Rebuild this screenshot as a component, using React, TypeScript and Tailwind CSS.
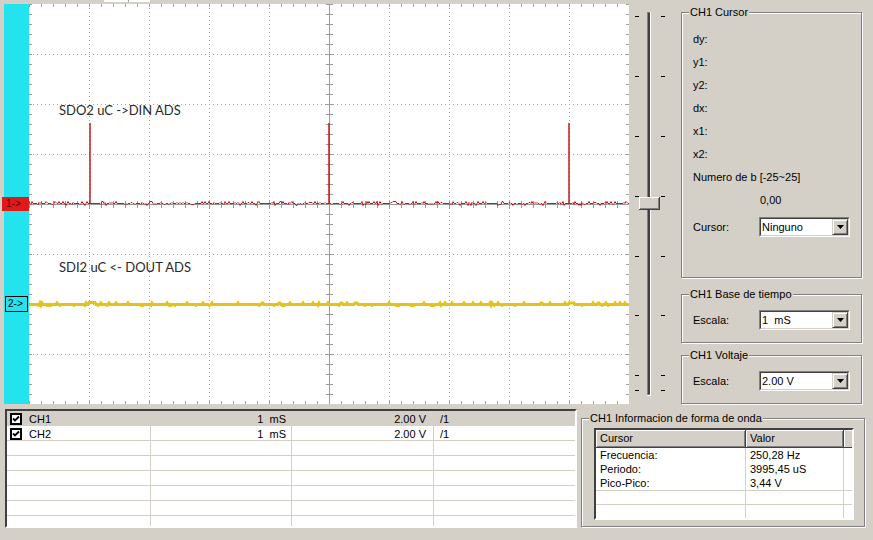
import React from 'react';

const W = 600;
const H = 400;

function makeRand(seed: number) {
  let s = seed;
  return () => {
    s = (s * 16807) % 2147483647;
    return (s - 1) / 2147483646;
  };
}

function redPoints() {
  const r = makeRand(11);
  const pts: string[] = [];
  for (let x = 0; x <= W; x++) {
    if (x === 61 || x === 300 || x === 540) {
      pts.push(`${x},199.5`, `${x},119`, `${x},199.5`);
      continue;
    }
    const v = r();
    let d = 0;
    if (v < 0.1) d = -2;
    else if (v < 0.22) d = -1;
    else if (v < 0.32) d = 1;
    else if (v < 0.36) d = 2;
    pts.push(`${x},${199.5 + d}`);
  }
  return pts.join(' ');
}

function yellowPoints() {
  const r = makeRand(29);
  const pts: string[] = [];
  for (let x = 0; x <= W; x++) {
    const v = r();
    let d = 0;
    if (v < 0.08) d = -1.5;
    else if (v < 0.14) d = 0.8;
    if (x >= 60 && x <= 66) d = -2;
    if (x >= 540 && x <= 545) d = -1.5;
    pts.push(`${x},${300.5 + d}`);
  }
  return pts.join(' ');
}

const RED = redPoints();
const YELLOW = yellowPoints();

function Plot() {
  const vs = [60, 120, 180, 240, 360, 420, 480, 540];
  const hs = [50, 100, 150, 250, 300, 350];
  const ticksX = Array.from({ length: 51 }, (_, i) => i * 12);
  const ticksY = Array.from({ length: 41 }, (_, i) => i * 10);
  return (
    <svg width={W} height={H} className="block shrink-0">
      <rect width={W} height={H} fill="#ffffff" />
      {vs.map((x) => (
        <line key={'v' + x} x1={x + 0.5} y1={0} x2={x + 0.5} y2={H} stroke="#a4a4a4" strokeDasharray="1 3" />
      ))}
      {hs.map((y) => (
        <line key={'h' + y} x1={0} y1={y + 0.5} x2={W} y2={y + 0.5} stroke="#a4a4a4" strokeDasharray="1 3" />
      ))}
      {/* center axes */}
      <line x1={300.5} y1={0} x2={300.5} y2={H} stroke="#9a9a9a" />
      <line x1={0} y1={200.5} x2={W} y2={200.5} stroke="#9a9a9a" />
      {ticksY.map((y) => (
        <line key={'cy' + y} x1={297} y1={y + 0.5} x2={304} y2={y + 0.5} stroke="#9a9a9a" />
      ))}
      {ticksX.map((x) => (
        <line key={'cx' + x} x1={x + 0.5} y1={197} x2={x + 0.5} y2={204} stroke="#9a9a9a" />
      ))}
      {/* border rulers */}
      {ticksX.map((x) => (
        <g key={'tx' + x}>
          <line x1={x + 0.5} y1={0} x2={x + 0.5} y2={3} stroke="#a0a0a0" />
          <line x1={x + 0.5} y1={H - 3} x2={x + 0.5} y2={H} stroke="#a0a0a0" />
        </g>
      ))}
      {ticksY.map((y) => (
        <g key={'ty' + y}>
          <line x1={0} y1={y + 0.5} x2={3} y2={y + 0.5} stroke="#a0a0a0" />
          <line x1={W - 3} y1={y + 0.5} x2={W} y2={y + 0.5} stroke="#a0a0a0" />
        </g>
      ))}
      <polyline points={YELLOW} fill="none" stroke="#e5c11b" strokeWidth={3} />
      <polyline points={RED} fill="none" stroke="#c01a1a" strokeWidth={1} />
      <text x={30} y={111} fontFamily="Lato, 'Open Sans', sans-serif" fontSize={13} fill="#2a2a2a">
        SDO2 uC -&gt;DIN ADS
      </text>
      <text x={30} y={268} fontFamily="Lato, 'Open Sans', sans-serif" fontSize={13} fill="#2a2a2a">
        SDI2 uC &lt;- DOUT ADS
      </text>
    </svg>
  );
}

function Slider() {
  const ticks = [12, 72, 132, 192, 252, 311, 371, 386];
  return (
    <svg width={52} height={H} className="block shrink-0">
      {ticks.map((y) => (
        <g key={y}>
          <line x1={6} y1={y + 0.5} x2={10} y2={y + 0.5} stroke="#000" />
          <line x1={32} y1={y + 0.5} x2={36} y2={y + 0.5} stroke="#000" />
        </g>
      ))}
      <rect x={18} y={8} width={4} height={384} fill="#ffffff" />
      <rect x={18} y={8} width={3} height={383} fill="#808080" />
      <rect x={19} y={9} width={2} height={381} fill="#404040" />
      {/* thumb */}
      <rect x={10} y={193} width={21} height={13} fill="#404040" />
      <rect x={10} y={193} width={20} height={12} fill="#ffffff" />
      <rect x={11} y={194} width={19} height={11} fill="#808080" />
      <rect x={11} y={194} width={18} height={10} fill="#d4d0c8" />
    </svg>
  );
}

function Select({ value }: { value: string }) {
  return (
    <div className="flex h-[20px] w-[91px] border border-t-[#808080] border-l-[#808080] border-r-white border-b-white">
      <div className="flex flex-1 items-center border border-t-[#404040] border-l-[#404040] border-r-[#d4d0c8] border-b-[#d4d0c8] bg-white">
        <span className="flex-1 whitespace-pre pl-[1px] leading-[14px]">{value}</span>
        <div className="flex h-[16px] w-[16px] items-center justify-center border border-t-[#d4d0c8] border-l-[#d4d0c8] border-r-[#404040] border-b-[#404040] bg-[#d4d0c8] shadow-[inset_1px_1px_0_#fff,inset_-1px_-1px_0_#808080]">
          <svg width={7} height={4} viewBox="0 0 7 4">
            <path d="M0 0h7L3.5 4z" fill="#000" />
          </svg>
        </div>
      </div>
    </div>
  );
}

function GroupBox({ title, className, children }: { title: string; className?: string; children?: React.ReactNode }) {
  return (
    <div className={`relative border border-[#808080] shadow-[1px_1px_0_#fff,inset_1px_1px_0_#fff] ${className ?? ''}`}>
      <span className="absolute -top-[8px] left-[7px] bg-[#d4d0c8] px-[1px] leading-[14px]">{title}</span>
      {children}
    </div>
  );
}

function Check() {
  return (
    <div className="flex h-[12px] w-[12px] items-center justify-center border-2 border-black bg-white">
      <svg width={8} height={8} viewBox="0 0 8 8">
        <path d="M1 3.5l2 2 4-4" fill="none" stroke="#000" strokeWidth={1.8} />
      </svg>
    </div>
  );
}

export default function App() {
  const cursorRows = ['dy:', 'y1:', 'y2:', 'dx:', 'x1:', 'x2:', 'Numero de b [-25~25]'];
  const chRows = [
    { ch: 'CH1', t: '1  mS', v: '2.00 V', d: '/1', sel: true },
    { ch: 'CH2', t: '1  mS', v: '2.00 V', d: '/1', sel: false },
  ];
  return (
    <div className="h-[540px] w-[873px] overflow-hidden bg-[#d4d0c8] font-['Liberation_Sans',Arial,sans-serif] text-[11px] text-black">
      {/* top strip */}
      <div className="flex h-[4px]">
        <div className="ml-[104px] flex h-[2px] w-[46px] bg-white">
          <div className="ml-[24px] w-[1px] bg-[#a0a0a0]" />
        </div>
      </div>

      <div className="flex h-[400px]">
        <div className="w-[4px] shrink-0" />
        {/* channel marker strip */}
        <div className="relative w-[25px] shrink-0 bg-[#22e3ee]">
          <div className="absolute left-[-2px] top-[193px] flex h-[14px] w-[27px] items-center bg-[#e01a1a] pl-[4px] text-[10px] leading-none text-[#600]">
            1-&gt;
          </div>
          <div className="absolute left-[1px] top-[292px] flex h-[16px] w-[23px] items-center border border-black pl-[2px] text-[10px] leading-none">
            2-&gt;
          </div>
        </div>
        <Plot />
        <Slider />
        {/* right panels */}
        <div className="flex w-[181px] shrink-0 flex-col pt-[8px]">
          <GroupBox title="CH1 Cursor" className="h-[266px]">
            <div className="flex flex-col pl-[11px] pt-[15px]">
              {cursorRows.map((r) => (
                <div key={r} className="flex h-[23px] items-center">
                  {r}
                </div>
              ))}
              <div className="flex h-[23px] items-center pl-[67px]">0,00</div>
              <div className="mt-[5px] flex h-[20px] items-center">
                <span className="w-[66px]">Cursor:</span>
                <Select value="Ninguno" />
              </div>
            </div>
          </GroupBox>
          <GroupBox title="CH1 Base de tiempo" className="mt-[16px] h-[49px]">
            <div className="flex items-center pl-[11px] pt-[15px]">
              <span className="w-[66px]">Escala:</span>
              <Select value="1  mS" />
            </div>
          </GroupBox>
          <GroupBox title="CH1 Voltaje" className="mt-[12px] h-[49px]">
            <div className="flex items-center pl-[11px] pt-[15px]">
              <span className="w-[66px]">Escala:</span>
              <Select value="2.00 V" />
            </div>
          </GroupBox>
        </div>
      </div>

      {/* bottom */}
      <div className="flex pt-[5px]">
        <div className="ml-[5px] h-[119px] w-[572px] shrink-0 overflow-hidden border-2 border-t-[#404040] border-l-[#404040] border-r-white border-b-white bg-white">
          {chRows.map((r) => (
            <div
              key={r.ch}
              className={`grid h-[15px] grid-cols-[144px_141px_142px_1fr] border-b border-[#d4d0c8] ${r.sel ? 'bg-[#d4d0c8]' : ''}`}
            >
              <div className="flex items-center border-r border-[#d4d0c8] pl-[3px]">
                <Check />
                <span className="ml-[7px]">{r.ch}</span>
              </div>
              <div className="flex items-center justify-end whitespace-pre border-r border-[#d4d0c8] pr-[5px]">{r.t}</div>
              <div className="flex items-center justify-end border-r border-[#d4d0c8] pr-[7px]">{r.v}</div>
              <div className="flex items-center pl-[6px]">{r.d}</div>
            </div>
          ))}
          {Array.from({ length: 6 }, (_, i) => (
            <div key={i} className="grid h-[15px] grid-cols-[144px_141px_142px_1fr] border-b border-[#d4d0c8]">
              <div className="border-r border-[#d4d0c8]" />
              <div className="border-r border-[#d4d0c8]" />
              <div className="border-r border-[#d4d0c8]" />
              <div />
            </div>
          ))}
        </div>

        <GroupBox title="CH1 Informacion de forma de onda" className="ml-[4px] mt-[9px] h-[109px] w-[284px] shrink-0">
          <div className="ml-[12px] mt-[9px] h-[92px] w-[260px] overflow-hidden border-2 border-t-[#404040] border-l-[#404040] border-r-white border-b-white bg-white">
            <div className="flex h-[18px] bg-[#d4d0c8]">
              <div className="flex w-[150px] items-center border-r border-b border-r-[#404040] border-b-[#404040] pl-[4px] shadow-[inset_1px_1px_0_#fff,inset_-1px_-1px_0_#808080]">
                Cursor
              </div>
              <div className="flex w-[98px] items-center border-r border-b border-r-[#404040] border-b-[#404040] pl-[4px] shadow-[inset_1px_1px_0_#fff,inset_-1px_-1px_0_#808080]">
                Valor
              </div>
              <div className="flex-1 border-b border-b-[#404040] shadow-[inset_1px_1px_0_#fff]" />
            </div>
            <div className="flex">
              <div className="flex w-[150px] flex-col border-r border-[#d4d0c8]">
                <div className="flex h-[14px] items-center pl-[4px]">Frecuencia:</div>
                <div className="flex h-[14px] items-center pl-[4px]">Periodo:</div>
                <div className="flex h-[14px] items-center pl-[4px]">Pico-Pico:</div>
                <div className="h-[14px] border-t border-[#d4d0c8]" />
                <div className="h-[14px] border-t border-[#d4d0c8]" />
              </div>
              <div className="flex w-[98px] flex-col border-r border-[#d4d0c8]">
                <div className="flex h-[14px] items-center pl-[4px]">250,28 Hz</div>
                <div className="flex h-[14px] items-center pl-[4px]">3995,45 uS</div>
                <div className="flex h-[14px] items-center pl-[4px]">3,44 V</div>
                <div className="h-[14px] border-t border-[#d4d0c8]" />
                <div className="h-[14px] border-t border-[#d4d0c8]" />
              </div>
              <div className="flex flex-1 flex-col">
                <div className="h-[42px]" />
                <div className="h-[14px] border-t border-[#d4d0c8]" />
                <div className="h-[14px] border-t border-[#d4d0c8]" />
              </div>
            </div>
          </div>
        </GroupBox>
      </div>
    </div>
  );
}
